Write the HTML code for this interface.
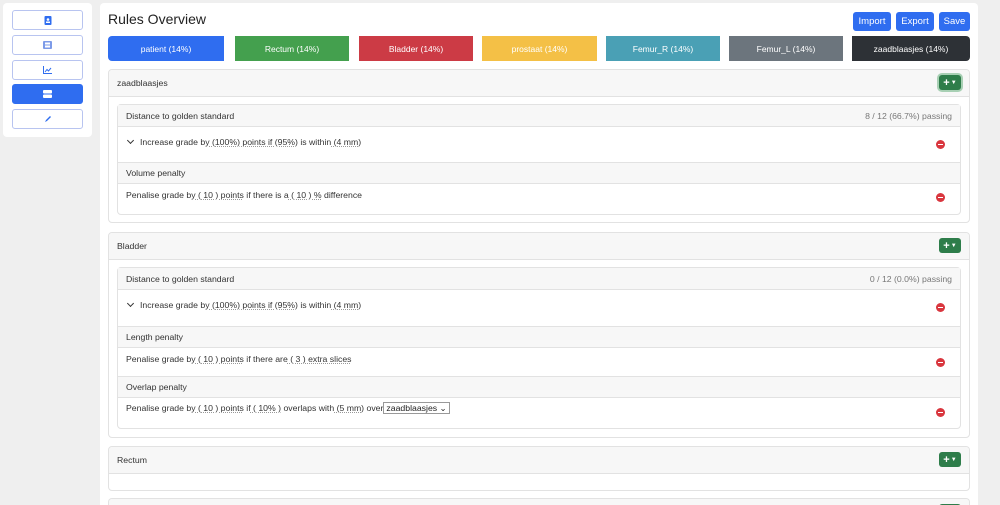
<!DOCTYPE html>
<html style="overflow:hidden;height:505px"><head><style>
*{box-sizing:border-box;margin:0;padding:0}
body{width:1000px;height:505px;overflow:hidden;background:#efefef;font-family:"Liberation Sans",sans-serif;color:#333;font-size:8.7px;position:relative}
.a{position:absolute}
.side{left:3px;top:3px;width:89px;height:134px;background:#fff;border-radius:4px}
.sb{position:absolute;left:9px;width:71px;height:20px;border:1px solid #b8c4f0;border-radius:3px;background:#fff;display:flex;align-items:center;justify-content:center}
.main{left:100px;top:3px;width:878px;height:502px;background:#fff;border-radius:4px 4px 0 0}
.btn{position:absolute;top:12px;height:19px;background:#2f6df0;color:#fff;border-radius:3px;font-size:9.5px;display:flex;align-items:center;justify-content:center}
.seg{position:absolute;top:36px;height:25px;color:#fff;font-size:8.5px;display:flex;align-items:center;justify-content:center}
.card{position:absolute;left:108px;width:862px;border:1px solid #e2e2e2;border-radius:4px;background:#fff;overflow:hidden}
.ch{height:27px;background:#f7f7f7;border-bottom:1px solid #e2e2e2;padding:0 8px;display:flex;align-items:center;position:relative}
.plus{position:absolute;right:8px;top:5px;width:22px;height:15px;background:#2e7d4a;border-radius:3px;color:#fff;font-size:11px;font-weight:bold;display:flex;align-items:center;justify-content:center}
.plus i{font-style:normal;font-size:6px;margin-left:1px}
.in{position:absolute;left:117px;width:844px;border:1px solid #e2e2e2;border-radius:4px;background:#fff}
.ih{height:22px;background:#f7f7f7;border-bottom:1px solid #e2e2e2;border-top:1px solid #e2e2e2;padding:0 8px;display:flex;align-items:center;position:relative}
.ih:first-child{border-top:none}
.ih .r{position:absolute;right:8px;color:#777}
.row{padding:0 8px;position:relative}
u{text-decoration:underline dotted #999}
.min{position:absolute;right:15px;width:9px;height:9px;border-radius:50%;background:#d9363e}
.min:after{content:"";position:absolute;left:2px;top:4px;width:5px;height:1px;background:#fff}
.chev{display:inline-block;width:5px;height:5px;border-right:1.2px solid #333;border-bottom:1.2px solid #333;transform:rotate(45deg);margin:0 7px 2px 2px}
</style></head><body>
<div class="a side">
<div class="sb" style="top:7px"><svg width="8" height="9"><rect x="0.5" y="0" width="7" height="9" rx="1" fill="#2f6df0"/><circle cx="4" cy="3.5" r="1.3" fill="#fff"/><rect x="2" y="5.5" width="4" height="1.5" fill="#fff"/></svg></div>
<div class="sb" style="top:32px"><svg width="9" height="8"><rect x="0" y="0" width="9" height="8" rx="1" fill="#7d9be8"/><rect x="2" y="1.5" width="5" height="2" fill="#fff"/><rect x="2" y="4.5" width="5" height="2" fill="#fff"/></svg></div>
<div class="sb" style="top:57px"><svg width="9" height="8"><path d="M0.5 0V7.5H9M2 6L4 3.5 5.5 5 8 2" stroke="#2f6df0" fill="none" stroke-width="1"/></svg></div>
<div class="sb" style="top:81px;background:#2f6df0;border-color:#2f6df0"><svg width="9" height="8"><rect x="0" y="0" width="9" height="3.5" rx="1" fill="#fff"/><rect x="0" y="4.5" width="9" height="3.5" rx="1" fill="#fff"/></svg></div>
<div class="sb" style="top:106px"><svg width="8" height="8"><path d="M1 7L2 5 6 1 7 2 3 6Z" fill="#2f6df0"/></svg></div>
</div>
<div class="a main"></div>
<div class="a" style="left:108px;top:11px;font-size:14px;color:#222">Rules Overview</div>
<div class="btn" style="left:853px;width:38px">Import</div>
<div class="btn" style="left:896px;width:38px">Export</div>
<div class="btn" style="left:939px;width:31px">Save</div>
<div class="seg" style="left:108px;width:116px;background:#2f6df0;border-radius:4px 0 0 4px">patient (14%)</div>
<div class="seg" style="left:235px;width:114px;background:#44a04e">Rectum (14%)</div>
<div class="seg" style="left:359px;width:114px;background:#cc3b45">Bladder (14%)</div>
<div class="seg" style="left:482px;width:115px;background:#f4c046">prostaat (14%)</div>
<div class="seg" style="left:606px;width:114px;background:#4aa0b5">Femur_R (14%)</div>
<div class="seg" style="left:729px;width:114px;background:#6c757d">Femur_L (14%)</div>
<div class="seg" style="left:852px;width:118px;background:#2d3136;border-radius:0 4px 4px 0">zaadblaasjes (14%)</div>

<div class="card" style="top:69px;height:154px"><div class="ch">zaadblaasjes<div class="plus" style="box-shadow:0 0 0 2px #a8d0b4">+<i>▼</i></div></div></div>
<div class="in" style="top:104px;height:111px">
<div class="ih">Distance to golden standard<span class="r">8 / 12 (66.7%) passing</span></div>
<div class="row" style="height:35px;padding-top:10px"><span class="chev"></span>Increase grade by<u>&nbsp;(100%) points if (95%)</u>&nbsp;is within<u>&nbsp;(4 mm)</u><span class="min" style="top:13px"></span></div>
<div class="ih">Volume penalty</div>
<div class="row" style="height:24px;padding-top:6px">Penalise grade by<u>&nbsp;( 10 ) points</u>&nbsp;if there is a<u>&nbsp;( 10 ) %</u>&nbsp;difference<span class="min" style="top:9px"></span></div>
</div>

<div class="card" style="top:232px;height:206px"><div class="ch">Bladder<div class="plus">+<i>▼</i></div></div></div>
<div class="in" style="top:267px;height:162px">
<div class="ih">Distance to golden standard<span class="r">0 / 12 (0.0%) passing</span></div>
<div class="row" style="height:36px;padding-top:10px"><span class="chev"></span>Increase grade by<u>&nbsp;(100%) points if (95%)</u>&nbsp;is within<u>&nbsp;(4 mm)</u><span class="min" style="top:13px"></span></div>
<div class="ih">Length penalty</div>
<div class="row" style="height:28px;padding-top:6px">Penalise grade by<u>&nbsp;( 10 ) points</u>&nbsp;if there are<u>&nbsp;( 3 ) extra slices</u><span class="min" style="top:10px"></span></div>
<div class="ih">Overlap penalty</div>
<div class="row" style="height:28px;padding-top:5px">Penalise grade by<u>&nbsp;( 10 ) points</u>&nbsp;if<u>&nbsp;( 10% )</u>&nbsp;overlaps with<u>&nbsp;(5 mm)</u>&nbsp;over<span style="border:1px solid #999;padding:0 2px;color:#222">zaadblaasjes ⌄</span><span class="min" style="top:10px"></span></div>
</div>

<div class="card" style="top:446px;height:45px"><div class="ch">Rectum<div class="plus">+<i>▼</i></div></div></div>
<div class="card" style="top:498px;height:7px;border-bottom:none;border-radius:4px 4px 0 0"><div class="ch"><div class="plus">+<i>▼</i></div></div></div>
</body></html>
